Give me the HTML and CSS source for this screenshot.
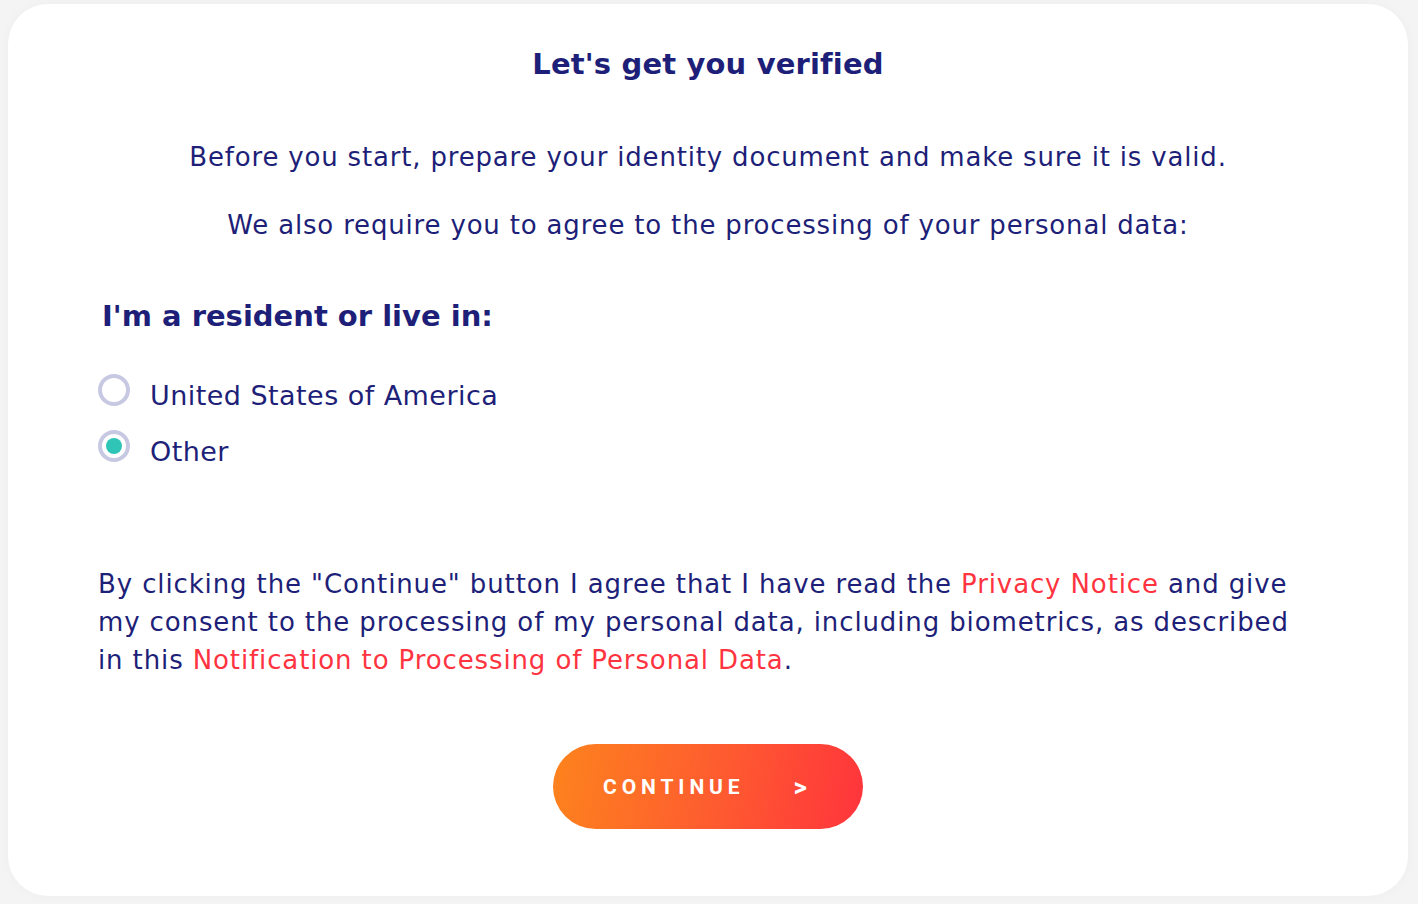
FILE: index.html
```html
<!DOCTYPE html>
<html lang="en">
<head>
<meta charset="utf-8">
<title>Let's get you verified</title>
<link rel="stylesheet" href="styles.css">
</head>
<body>
<main class="card">
  <h1 class="title">Let's get you verified</h1>
  <p class="intro">Before you start, prepare your identity document and make sure it is valid.</p>
  <p class="intro intro-second">We also require you to agree to the processing of your personal data:</p>
  <section class="residence">
    <h2 class="residence-title">I'm a resident or live in:</h2>
    <label class="option">
      <input type="radio" name="country" class="radio-input">
      <span class="radio"></span>
      <span class="option-label">United States of America</span>
    </label>
    <label class="option">
      <input type="radio" name="country" class="radio-input" checked>
      <span class="radio"></span>
      <span class="option-label">Other</span>
    </label>
  </section>
  <p class="consent">By clicking the "Continue" button I agree that I have read the <a href="#" class="link">Privacy Notice</a> and give my consent to the processing of my personal data, including biometrics, as described in this <a href="#" class="link">Notification to Processing of Personal Data</a>.</p>
  <div class="actions">
    <button class="continue" type="button"><span class="continue-text">CONTINUE</span><span class="continue-arrow">&gt;</span></button>
  </div>
</main>
</body>
</html>
```

FILE: styles.css
```css
html, body {
  margin: 0;
  padding: 0;
}
body {
  background: #f4f4f4;
  font-family: "DejaVu Sans", "Open Sans", sans-serif;
  color: #1e1f78;
  padding: 4px 10px 8px 8px;
  box-sizing: border-box;
  height: 904px;
}
.card {
  box-sizing: border-box;
  background: #ffffff;
  border-radius: 40px;
  height: 892px;
  padding: 36px 90px 0 90px;
  box-shadow: 0 0 12px rgba(0, 0, 0, 0.03);
  display: flex;
  flex-direction: column;
}
.title {
  margin: 0;
  text-align: center;
  font-size: 29px;
  font-weight: 700;
  line-height: 48px;
  letter-spacing: 0.15px;
}
.intro {
  margin: 51px 0 0 0;
  text-align: center;
  font-size: 26px;
  line-height: 36px;
  letter-spacing: 0.82px;
}
.intro-second {
  margin-top: 32px;
}
.residence {
  margin-top: 53px;
  display: flex;
  flex-direction: column;
}
.residence-title {
  margin: 0 0 0 4px;
  font-size: 29px;
  font-weight: 700;
  line-height: 40px;
}
.option {
  display: flex;
  align-items: center;
  gap: 20px;
  height: 56px;
  cursor: pointer;
}
.residence-title + .option {
  margin-top: 32px;
}
.radio-input {
  position: absolute;
  opacity: 0;
  width: 0;
  height: 0;
  margin: 0;
}
.radio {
  box-sizing: border-box;
  width: 32px;
  height: 32px;
  border: 4px solid #c7c8e2;
  border-radius: 50%;
  display: flex;
  align-items: center;
  justify-content: center;
  flex: none;
  margin-top: -12px;
}
.radio-input:checked + .radio::after {
  content: "";
  width: 16px;
  height: 16px;
  border-radius: 50%;
  background: #2ec5b7;
}
.option-label {
  font-size: 27px;
  line-height: 36px;
  letter-spacing: 0.45px;
}
.consent {
  margin: 85px 0 0 0;
  max-width: 1205px;
  font-size: 26px;
  line-height: 38px;
  letter-spacing: 0.88px;
}
.link {
  color: #ff3440;
  text-decoration: none;
}
.actions {
  margin-top: 65px;
  display: flex;
  justify-content: center;
}
.continue {
  width: 310px;
  height: 85px;
  border: none;
  border-radius: 43px;
  background: linear-gradient(100deg, #fd831d 0%, #fe5a30 55%, #ff343c 100%);
  color: #ffffff;
  font-family: Roboto, "Liberation Sans", sans-serif;
  font-weight: 700;
  font-size: 21px;
  letter-spacing: 4.9px;
  display: flex;
  align-items: center;
  justify-content: flex-start;
  padding: 0 0 0 50px;
  cursor: pointer;
}
.continue-arrow {
  margin-left: 49px;
  font-size: 26px;
  letter-spacing: 0;
}
```
